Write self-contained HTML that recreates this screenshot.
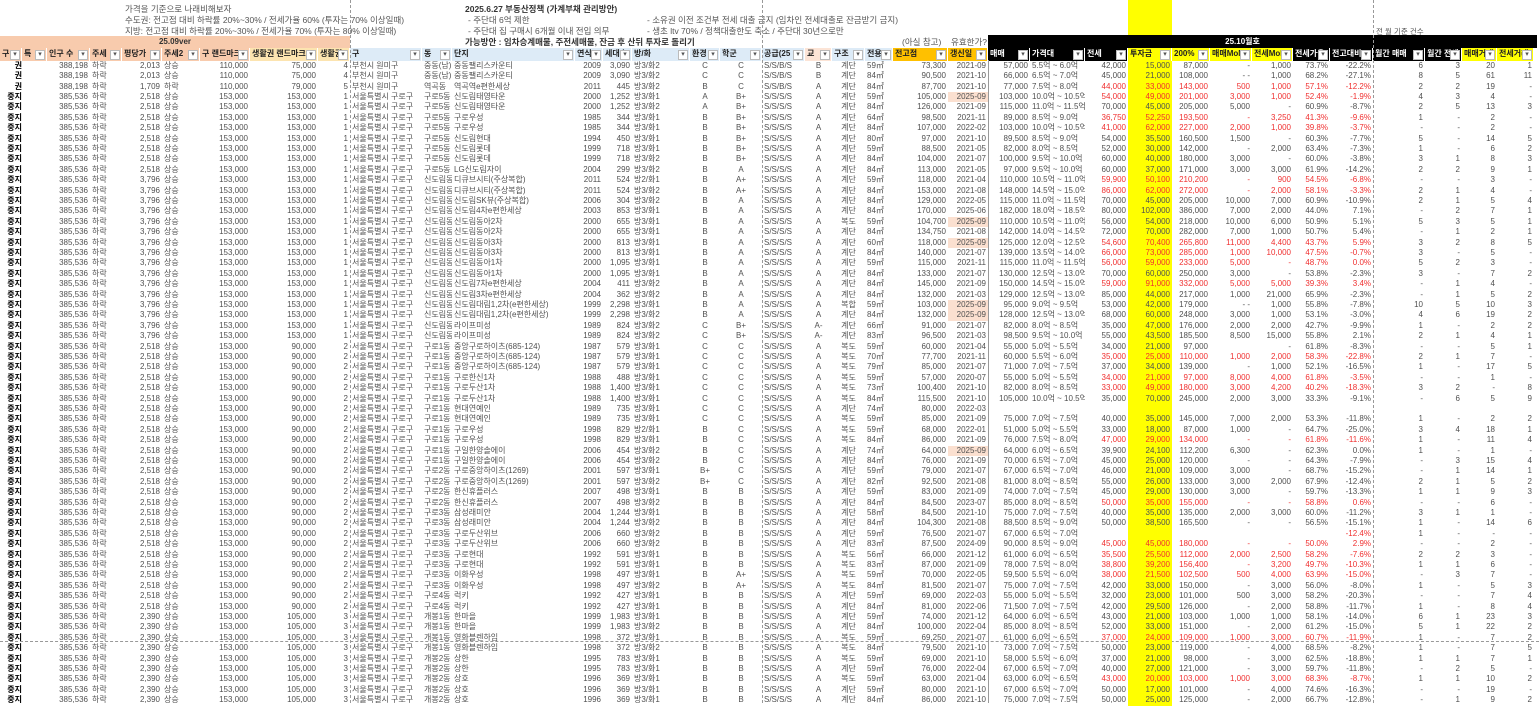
<!DOCTYPE html>
<html><head><meta charset="utf-8"><style>
*{margin:0;padding:0;box-sizing:border-box}
body{width:1539px;height:703px;overflow:hidden;background:#fff;font-family:"Liberation Sans","Noto Sans CJK KR",sans-serif;font-size:8px;color:#505050;position:relative}
.t{position:absolute;white-space:nowrap;font-size:8.5px;color:#555}
.bd{font-weight:bold;color:#333}
.r,.h{position:absolute;left:0;display:flex;height:10.4px;line-height:10.4px;white-space:nowrap}
.h{top:48px;height:12.5px;line-height:12.5px;font-weight:bold;color:#222;font-size:8px}
.r i,.h i{font-style:normal;display:block;overflow:hidden;padding:0 2px;flex:none;position:relative}
.h i{padding-right:11px;border-right:1px solid #fff}
.h i::after{content:"▾";position:absolute;right:1px;top:2px;width:8px;height:8px;line-height:7px;font-size:7px;text-align:center;background:#fff;border:1px solid #bbb;color:#555;font-weight:normal}
i:nth-child(1){width:22px}i:nth-child(2){width:25px}i:nth-child(3){width:43px}i:nth-child(4){width:32px}i:nth-child(5){width:40px}i:nth-child(6){width:38px}i:nth-child(7){width:50px}i:nth-child(8){width:68px}i:nth-child(9){width:32px}i:nth-child(10){width:72px}i:nth-child(11){width:30px}i:nth-child(12){width:123px}i:nth-child(13){width:28px}i:nth-child(14){width:29px}i:nth-child(15){width:58px}i:nth-child(16){width:30px}i:nth-child(17){width:42px}i:nth-child(18){width:43px}i:nth-child(19){width:27px}i:nth-child(20){width:33px}i:nth-child(21){width:28px}i:nth-child(22){width:55px}i:nth-child(23){width:40px}i:nth-child(24){width:42px}i:nth-child(25){width:55px}i:nth-child(26){width:43px}i:nth-child(27){width:44px}i:nth-child(28){width:38px}i:nth-child(29){width:42px}i:nth-child(30){width:41px}i:nth-child(31){width:37px}i:nth-child(32){width:43px}i:nth-child(33){width:52px}i:nth-child(34){width:37px}i:nth-child(35){width:35px}i:nth-child(36){width:37px}i:nth-child(37){width:5px}
.r i:nth-child(3),.r i:nth-child(5),.r i:nth-child(7),.r i:nth-child(8),.r i:nth-child(9),.r i:nth-child(13),.r i:nth-child(14),.r i:nth-child(22),.r i:nth-child(23),.r i:nth-child(24),.r i:nth-child(26),.r i:nth-child(27),.r i:nth-child(28),.r i:nth-child(29),.r i:nth-child(30),.r i:nth-child(31),.r i:nth-child(32),.r i:nth-child(33),.r i:nth-child(34),.r i:nth-child(35),.r i:nth-child(36){text-align:right}
.r i:nth-child(16),.r i:nth-child(17),.r i:nth-child(19),.r i:nth-child(20){text-align:center}
.r i:nth-child(1){text-align:right;color:#000;font-weight:bold;padding:0}
.r i:nth-child(27){background:#ffff00}
.x i:nth-child(n+26):nth-child(-n+32){color:#f03030}
.r i.p{background:#fbe0d0}
.pe{background:#f8cbad}.ye{background:#fce4b0}.lb{background:#ddebf7}.or{background:#ffc000}.pk{background:#fce4d6}.bk{background:#000;color:#fff}.yl{background:#ffff00}
.vl{position:absolute;top:0;height:703px;border-left:1px dashed #999}
</style></head><body>
<div style="position:absolute;left:1128px;top:0;width:44px;height:36px;background:#ffff00"></div>
<div class="t" style="left:125px;top:3px">가격을 기준으로 나래비해보자</div>
<div class="t" style="left:125px;top:14px">수도권: 전고점 대비 하락률 20%~30% / 전세가율 60% (투자는 70% 이상일때)</div>
<div class="t" style="left:125px;top:25px">지방: 전고점 대비 하락률 20%~30% / 전세가율 70% (투자는 80% 이상일때)</div>
<div class="t bd" style="left:465px;top:3px">2025.6.27 부동산정책 (가계부채 관리방안)</div>
<div class="t" style="left:468px;top:14px">- 주단대 6억 제한</div>
<div class="t" style="left:468px;top:25px">- 주단대 집 구매시 6개월 이내 전입 의무</div>
<div class="t" style="left:647px;top:14px">- 소유권 이전 조건부 전세 대출 금지 (임차인 전세대출로 잔금받기 금지)</div>
<div class="t" style="left:647px;top:25px">- 생초 ltv 70% / 정책대출한도 축소 / 주단대 30년으로만</div>
<div class="t bd" style="left:465px;top:36px">가능방안 : 임차승계매물, 주전세매물, 잔금 후 산뒤 투자로 돌리기</div>
<div class="t" style="left:902px;top:36px">(아실 참고)</div>
<div class="t" style="left:951px;top:36px">유효한가?</div>
<div class="t" style="left:1376px;top:26px;font-size:7.5px">전 월 기준 건수</div>
<div style="position:absolute;left:0;top:36px;width:350px;height:12px;background:#f8cbad;text-align:center;font-weight:bold;line-height:12px;color:#333">25.09ver</div>
<div style="position:absolute;left:988px;top:35px;width:549px;height:13px;background:#000;color:#fff;font-weight:bold;line-height:13px;text-align:center;padding-right:40px">25.10월호</div>
<div class="h"><i class="pe">구 ㅋ</i><i class="pe">특</i><i class="pe">인구 수</i><i class="pe">주세</i><i class="pe">평당가</i><i class="pe">주세2</i><i class="pe">구 랜드마크</i><i class="ye">생활권 랜드마크</i><i class="ye">생활권</i><i class="lb">구</i><i class="lb">동</i><i class="lb">단지</i><i class="lb">연식</i><i class="lb">세대수</i><i class="lb">방/화</i><i class="lb">환경</i><i class="lb">학군</i><i class="lb">공급(25</i><i class="pk">교</i><i class="lb">구조</i><i class="lb">전용</i><i class="or">전고점</i><i class="or">갱신일</i><i class="bk">매매</i><i class="bk">가격대</i><i class="bk">전세</i><i class="yl">투자금</i><i class="yl">200%</i><i class="yl">매매MoM</i><i class="yl">전세MoM</i><i class="bk">전세가율</i><i class="bk">전고대비</i><i class="bk">월간 매매</i><i class="bk">월간 전세</i><i class="yl">매매거래</i><i class="yl">전세거래</i></div>
<div style="position:absolute;left:988px;top:60px;height:643px;border-left:1px solid #999"></div>
<div class="vl" style="left:350px"></div><div class="vl" style="left:762px"></div><div class="vl" style="left:1373px"></div>
<div style="position:absolute;left:0;top:641px;width:1539px;border-top:1px dashed #999"></div>

<div style="position:absolute;left:0;top:60.8px">
<div class="r" style="top:0px"><i>권</i><i></i><i>388,198</i><i>하락</i><i>2,013</i><i>상승</i><i>110,000</i><i>75,000</i><i>4</i><i>부천시 원미구</i><i>중동(남)</i><i>중동팰리스카운티</i><i>2009</i><i>3,090</i><i>방3/화2</i><i>C</i><i>C</i><i>S/S/B/S</i><i>B</i><i>계단</i><i>59㎡</i><i>73,300</i><i>2021-09</i><i>57,000</i><i>5.5억 ~ 6.0억</i><i>42,000</i><i>15,000</i><i>87,000</i><i>-</i><i>1,000</i><i>73.7%</i><i>-22.2%</i><i>6</i><i>3</i><i>20</i><i>1</i><i></i></div>
<div class="r" style="top:10.4px"><i>권</i><i></i><i>388,198</i><i>하락</i><i>2,013</i><i>상승</i><i>110,000</i><i>75,000</i><i>4</i><i>부천시 원미구</i><i>중동(남)</i><i>중동팰리스카운티</i><i>2009</i><i>3,090</i><i>방3/화2</i><i>C</i><i>C</i><i>S/S/B/S</i><i>B</i><i>계단</i><i>84㎡</i><i>90,500</i><i>2021-10</i><i>66,000</i><i>6.5억 ~ 7.0억</i><i>45,000</i><i>21,000</i><i>108,000</i><i>- -</i><i>1,000</i><i>68.2%</i><i>-27.1%</i><i>8</i><i>5</i><i>61</i><i>11</i><i></i></div>
<div class="r x" style="top:20.8px"><i>권</i><i></i><i>388,198</i><i>하락</i><i>1,709</i><i>하락</i><i>110,000</i><i>79,000</i><i>5</i><i>부천시 원미구</i><i>역곡동</i><i>역곡역e편한세상</i><i>2011</i><i>445</i><i>방3/화2</i><i>B</i><i>C</i><i>S/S/B/S</i><i>A</i><i>계단</i><i>84㎡</i><i>87,700</i><i>2021-10</i><i>77,000</i><i>7.5억 ~ 8.0억</i><i>44,000</i><i>33,000</i><i>143,000</i><i>500</i><i>1,000</i><i>57.1%</i><i>-12.2%</i><i>2</i><i>2</i><i>19</i><i>-</i><i></i></div>
<div class="r x" style="top:31.2px"><i>중지</i><i></i><i>385,536</i><i>하락</i><i>2,518</i><i>상승</i><i>153,000</i><i>153,000</i><i>1</i><i>서울특별시 구로구</i><i>구로5동</i><i>신도림태영타운</i><i>2000</i><i>1,252</i><i>방3/화1</i><i>A</i><i>B+</i><i>S/S/S/S</i><i>A</i><i>계단</i><i>59㎡</i><i>105,000</i><i class="p">2025-09</i><i>103,000</i><i>10.0억 ~ 10.5억</i><i>54,000</i><i>49,000</i><i>201,000</i><i>3,000</i><i>1,000</i><i>52.4%</i><i>-1.9%</i><i>4</i><i>3</i><i>4</i><i>-</i><i></i></div>
<div class="r" style="top:41.6px"><i>중지</i><i></i><i>385,536</i><i>하락</i><i>2,518</i><i>상승</i><i>153,000</i><i>153,000</i><i>1</i><i>서울특별시 구로구</i><i>구로5동</i><i>신도림태영타운</i><i>2000</i><i>1,252</i><i>방3/화2</i><i>A</i><i>B+</i><i>S/S/S/S</i><i>A</i><i>계단</i><i>84㎡</i><i>126,000</i><i>2021-09</i><i>115,000</i><i>11.0억 ~ 11.5억</i><i>70,000</i><i>45,000</i><i>205,000</i><i>5,000</i><i>-</i><i>60.9%</i><i>-8.7%</i><i>2</i><i>5</i><i>13</i><i>3</i><i></i></div>
<div class="r x" style="top:52px"><i>중지</i><i></i><i>385,536</i><i>하락</i><i>2,518</i><i>상승</i><i>153,000</i><i>153,000</i><i>1</i><i>서울특별시 구로구</i><i>구로5동</i><i>구로우성</i><i>1985</i><i>344</i><i>방3/화1</i><i>B</i><i>B+</i><i>S/S/S/S</i><i>A</i><i>계단</i><i>64㎡</i><i>98,500</i><i>2021-11</i><i>89,000</i><i>8.5억 ~ 9.0억</i><i>36,750</i><i>52,250</i><i>193,500</i><i>-</i><i>3,250</i><i>41.3%</i><i>-9.6%</i><i>1</i><i>-</i><i>2</i><i>-</i><i></i></div>
<div class="r x" style="top:62.4px"><i>중지</i><i></i><i>385,536</i><i>하락</i><i>2,518</i><i>상승</i><i>153,000</i><i>153,000</i><i>1</i><i>서울특별시 구로구</i><i>구로5동</i><i>구로우성</i><i>1985</i><i>344</i><i>방3/화1</i><i>B</i><i>B+</i><i>S/S/S/S</i><i>A</i><i>계단</i><i>84㎡</i><i>107,000</i><i>2022-02</i><i>103,000</i><i>10.0억 ~ 10.5억</i><i>41,000</i><i>62,000</i><i>227,000</i><i>2,000</i><i>1,000</i><i>39.8%</i><i>-3.7%</i><i>-</i><i>-</i><i>2</i><i>-</i><i></i></div>
<div class="r" style="top:72.8px"><i>중지</i><i></i><i>385,536</i><i>하락</i><i>2,518</i><i>상승</i><i>153,000</i><i>153,000</i><i>1</i><i>서울특별시 구로구</i><i>구로5동</i><i>신도림현대</i><i>1994</i><i>450</i><i>방3/화1</i><i>B</i><i>B+</i><i>S/S/S/S</i><i>A</i><i>계단</i><i>80㎡</i><i>97,000</i><i>2021-10</i><i>89,500</i><i>8.5억 ~ 9.0억</i><i>54,000</i><i>35,500</i><i>160,500</i><i>1,500</i><i>-</i><i>60.3%</i><i>-7.7%</i><i>5</i><i>-</i><i>14</i><i>5</i><i></i></div>
<div class="r" style="top:83.2px"><i>중지</i><i></i><i>385,536</i><i>하락</i><i>2,518</i><i>상승</i><i>153,000</i><i>153,000</i><i>1</i><i>서울특별시 구로구</i><i>구로5동</i><i>신도림롯데</i><i>1999</i><i>718</i><i>방3/화1</i><i>B</i><i>B+</i><i>S/S/S/S</i><i>A</i><i>계단</i><i>59㎡</i><i>88,500</i><i>2021-05</i><i>82,000</i><i>8.0억 ~ 8.5억</i><i>52,000</i><i>30,000</i><i>142,000</i><i>-</i><i>2,000</i><i>63.4%</i><i>-7.3%</i><i>1</i><i>-</i><i>6</i><i>2</i><i></i></div>
<div class="r" style="top:93.6px"><i>중지</i><i></i><i>385,536</i><i>하락</i><i>2,518</i><i>상승</i><i>153,000</i><i>153,000</i><i>1</i><i>서울특별시 구로구</i><i>구로5동</i><i>신도림롯데</i><i>1999</i><i>718</i><i>방3/화2</i><i>B</i><i>B+</i><i>S/S/S/S</i><i>A</i><i>계단</i><i>84㎡</i><i>104,000</i><i>2021-07</i><i>100,000</i><i>9.5억 ~ 10.0억</i><i>60,000</i><i>40,000</i><i>180,000</i><i>3,000</i><i>-</i><i>60.0%</i><i>-3.8%</i><i>3</i><i>1</i><i>8</i><i>3</i><i></i></div>
<div class="r" style="top:104px"><i>중지</i><i></i><i>385,536</i><i>하락</i><i>2,518</i><i>상승</i><i>153,000</i><i>153,000</i><i>1</i><i>서울특별시 구로구</i><i>구로5동</i><i>LG신도림자이</i><i>2004</i><i>299</i><i>방3/화2</i><i>B</i><i>A</i><i>S/S/S/S</i><i>A</i><i>계단</i><i>84㎡</i><i>113,000</i><i>2021-05</i><i>97,000</i><i>9.5억 ~ 10.0억</i><i>60,000</i><i>37,000</i><i>171,000</i><i>3,000</i><i>3,000</i><i>61.9%</i><i>-14.2%</i><i>2</i><i>2</i><i>9</i><i>1</i><i></i></div>
<div class="r x" style="top:114.4px"><i>중지</i><i></i><i>385,536</i><i>하락</i><i>3,796</i><i>상승</i><i>153,000</i><i>153,000</i><i>1</i><i>서울특별시 구로구</i><i>신도림동</i><i>디큐브시티(주상복합)</i><i>2011</i><i>524</i><i>방2/화1</i><i>B</i><i>A+</i><i>S/S/S/S</i><i>A</i><i>계단</i><i>59㎡</i><i>118,000</i><i>2021-04</i><i>110,000</i><i>10.5억 ~ 11.0억</i><i>59,900</i><i>50,100</i><i>210,200</i><i>-</i><i>900</i><i>54.5%</i><i>-6.8%</i><i>-</i><i>-</i><i>3</i><i>-</i><i></i></div>
<div class="r x" style="top:124.8px"><i>중지</i><i></i><i>385,536</i><i>하락</i><i>3,796</i><i>상승</i><i>153,000</i><i>153,000</i><i>1</i><i>서울특별시 구로구</i><i>신도림동</i><i>디큐브시티(주상복합)</i><i>2011</i><i>524</i><i>방3/화2</i><i>B</i><i>A+</i><i>S/S/S/S</i><i>A</i><i>계단</i><i>84㎡</i><i>153,000</i><i>2021-08</i><i>148,000</i><i>14.5억 ~ 15.0억</i><i>86,000</i><i>62,000</i><i>272,000</i><i>-</i><i>2,000</i><i>58.1%</i><i>-3.3%</i><i>2</i><i>1</i><i>4</i><i>-</i><i></i></div>
<div class="r" style="top:135.2px"><i>중지</i><i></i><i>385,536</i><i>하락</i><i>3,796</i><i>상승</i><i>153,000</i><i>153,000</i><i>1</i><i>서울특별시 구로구</i><i>신도림동</i><i>신도림SK뷰(주상복합)</i><i>2006</i><i>304</i><i>방3/화2</i><i>B</i><i>A</i><i>S/S/S/S</i><i>A</i><i>계단</i><i>84㎡</i><i>129,000</i><i>2022-05</i><i>115,000</i><i>11.0억 ~ 11.5억</i><i>70,000</i><i>45,000</i><i>205,000</i><i>10,000</i><i>7,000</i><i>60.9%</i><i>-10.9%</i><i>2</i><i>1</i><i>5</i><i>4</i><i></i></div>
<div class="r" style="top:145.6px"><i>중지</i><i></i><i>385,536</i><i>하락</i><i>3,796</i><i>상승</i><i>153,000</i><i>153,000</i><i>1</i><i>서울특별시 구로구</i><i>신도림동</i><i>신도림4차e편한세상</i><i>2003</i><i>853</i><i>방3/화1</i><i>B</i><i>A</i><i>S/S/S/S</i><i>A</i><i>계단</i><i>84㎡</i><i>170,000</i><i>2025-06</i><i>182,000</i><i>18.0억 ~ 18.5억</i><i>80,000</i><i>102,000</i><i>386,000</i><i>7,000</i><i>2,000</i><i>44.0%</i><i>7.1%</i><i>-</i><i>2</i><i>7</i><i>1</i><i></i></div>
<div class="r" style="top:156px"><i>중지</i><i></i><i>385,536</i><i>하락</i><i>3,796</i><i>상승</i><i>153,000</i><i>153,000</i><i>1</i><i>서울특별시 구로구</i><i>신도림동</i><i>신도림동아2차</i><i>2000</i><i>655</i><i>방3/화1</i><i>B</i><i>A</i><i>S/S/S/S</i><i>A</i><i>복도</i><i>59㎡</i><i>104,700</i><i class="p">2025-09</i><i>110,000</i><i>10.5억 ~ 11.0억</i><i>56,000</i><i>54,000</i><i>218,000</i><i>10,000</i><i>6,000</i><i>50.9%</i><i>5.1%</i><i>5</i><i>3</i><i>5</i><i>1</i><i></i></div>
<div class="r" style="top:166.4px"><i>중지</i><i></i><i>385,536</i><i>하락</i><i>3,796</i><i>상승</i><i>153,000</i><i>153,000</i><i>1</i><i>서울특별시 구로구</i><i>신도림동</i><i>신도림동아2차</i><i>2000</i><i>655</i><i>방3/화1</i><i>B</i><i>A</i><i>S/S/S/S</i><i>A</i><i>계단</i><i>84㎡</i><i>134,750</i><i>2021-08</i><i>142,000</i><i>14.0억 ~ 14.5억</i><i>72,000</i><i>70,000</i><i>282,000</i><i>7,000</i><i>1,000</i><i>50.7%</i><i>5.4%</i><i>-</i><i>1</i><i>2</i><i>1</i><i></i></div>
<div class="r x" style="top:176.8px"><i>중지</i><i></i><i>385,536</i><i>하락</i><i>3,796</i><i>상승</i><i>153,000</i><i>153,000</i><i>1</i><i>서울특별시 구로구</i><i>신도림동</i><i>신도림동아3차</i><i>2000</i><i>813</i><i>방3/화1</i><i>B</i><i>A</i><i>S/S/S/S</i><i>A</i><i>계단</i><i>60㎡</i><i>118,000</i><i class="p">2025-09</i><i>125,000</i><i>12.0억 ~ 12.5억</i><i>54,600</i><i>70,400</i><i>265,800</i><i>11,000</i><i>4,400</i><i>43.7%</i><i>5.9%</i><i>3</i><i>2</i><i>8</i><i>5</i><i></i></div>
<div class="r x" style="top:187.2px"><i>중지</i><i></i><i>385,536</i><i>하락</i><i>3,796</i><i>상승</i><i>153,000</i><i>153,000</i><i>1</i><i>서울특별시 구로구</i><i>신도림동</i><i>신도림동아3차</i><i>2000</i><i>813</i><i>방3/화1</i><i>B</i><i>A</i><i>S/S/S/S</i><i>A</i><i>계단</i><i>84㎡</i><i>140,000</i><i>2021-07</i><i>139,000</i><i>13.5억 ~ 14.0억</i><i>66,000</i><i>73,000</i><i>285,000</i><i>1,000</i><i>10,000</i><i>47.5%</i><i>-0.7%</i><i>3</i><i>-</i><i>5</i><i>-</i><i></i></div>
<div class="r x" style="top:197.6px"><i>중지</i><i></i><i>385,536</i><i>하락</i><i>3,796</i><i>상승</i><i>153,000</i><i>153,000</i><i>1</i><i>서울특별시 구로구</i><i>신도림동</i><i>신도림동아1차</i><i>2000</i><i>1,095</i><i>방3/화1</i><i>B</i><i>A</i><i>S/S/S/S</i><i>A</i><i>계단</i><i>59㎡</i><i>115,000</i><i>2021-11</i><i>115,000</i><i>11.0억 ~ 11.5억</i><i>56,000</i><i>59,000</i><i>233,000</i><i>5,000</i><i>-</i><i>48.7%</i><i>0.0%</i><i>5</i><i>2</i><i>3</i><i>-</i><i></i></div>
<div class="r" style="top:208px"><i>중지</i><i></i><i>385,536</i><i>하락</i><i>3,796</i><i>상승</i><i>153,000</i><i>153,000</i><i>1</i><i>서울특별시 구로구</i><i>신도림동</i><i>신도림동아1차</i><i>2000</i><i>1,095</i><i>방3/화1</i><i>B</i><i>A</i><i>S/S/S/S</i><i>A</i><i>계단</i><i>84㎡</i><i>133,000</i><i>2021-07</i><i>130,000</i><i>12.5억 ~ 13.0억</i><i>70,000</i><i>60,000</i><i>250,000</i><i>3,000</i><i>-</i><i>53.8%</i><i>-2.3%</i><i>3</i><i>-</i><i>7</i><i>2</i><i></i></div>
<div class="r x" style="top:218.4px"><i>중지</i><i></i><i>385,536</i><i>하락</i><i>3,796</i><i>상승</i><i>153,000</i><i>153,000</i><i>1</i><i>서울특별시 구로구</i><i>신도림동</i><i>신도림7차e편한세상</i><i>2004</i><i>411</i><i>방3/화2</i><i>B</i><i>A</i><i>S/S/S/S</i><i>A</i><i>계단</i><i>84㎡</i><i>145,000</i><i>2021-09</i><i>150,000</i><i>14.5억 ~ 15.0억</i><i>59,000</i><i>91,000</i><i>332,000</i><i>5,000</i><i>5,000</i><i>39.3%</i><i>3.4%</i><i>-</i><i>1</i><i>4</i><i>-</i><i></i></div>
<div class="r" style="top:228.8px"><i>중지</i><i></i><i>385,536</i><i>하락</i><i>3,796</i><i>상승</i><i>153,000</i><i>153,000</i><i>1</i><i>서울특별시 구로구</i><i>신도림동</i><i>신도림3차e편한세상</i><i>2004</i><i>362</i><i>방3/화2</i><i>B</i><i>A</i><i>S/S/S/S</i><i>A</i><i>계단</i><i>84㎡</i><i>132,000</i><i>2021-03</i><i>129,000</i><i>12.5억 ~ 13.0억</i><i>85,000</i><i>44,000</i><i>217,000</i><i>1,000</i><i>21,000</i><i>65.9%</i><i>-2.3%</i><i>-</i><i>1</i><i>5</i><i>2</i><i></i></div>
<div class="r" style="top:239.2px"><i>중지</i><i></i><i>385,536</i><i>하락</i><i>3,796</i><i>상승</i><i>153,000</i><i>153,000</i><i>1</i><i>서울특별시 구로구</i><i>신도림동</i><i>신도림대림1,2차(e편한세상)</i><i>1999</i><i>2,298</i><i>방3/화1</i><i>B</i><i>A</i><i>S/S/S/S</i><i>A</i><i>복합</i><i>59㎡</i><i>103,000</i><i class="p">2025-09</i><i>95,000</i><i>9.0억 ~ 9.5억</i><i>53,000</i><i>42,000</i><i>179,000</i><i>- -</i><i>1,000</i><i>55.8%</i><i>-7.8%</i><i>10</i><i>5</i><i>10</i><i>3</i><i></i></div>
<div class="r" style="top:249.6px"><i>중지</i><i></i><i>385,536</i><i>하락</i><i>3,796</i><i>상승</i><i>153,000</i><i>153,000</i><i>1</i><i>서울특별시 구로구</i><i>신도림동</i><i>신도림대림1,2차(e편한세상)</i><i>1999</i><i>2,298</i><i>방3/화2</i><i>B</i><i>A</i><i>S/S/S/S</i><i>A</i><i>계단</i><i>84㎡</i><i>132,000</i><i class="p">2025-09</i><i>128,000</i><i>12.5억 ~ 13.0억</i><i>68,000</i><i>60,000</i><i>248,000</i><i>3,000</i><i>1,000</i><i>53.1%</i><i>-3.0%</i><i>4</i><i>6</i><i>19</i><i>2</i><i></i></div>
<div class="r" style="top:260px"><i>중지</i><i></i><i>385,536</i><i>하락</i><i>3,796</i><i>상승</i><i>153,000</i><i>153,000</i><i>1</i><i>서울특별시 구로구</i><i>신도림동</i><i>라이프미성</i><i>1989</i><i>824</i><i>방3/화2</i><i>C</i><i>B+</i><i>S/S/S/S</i><i>A-</i><i>계단</i><i>66㎡</i><i>91,000</i><i>2021-07</i><i>82,000</i><i>8.0억 ~ 8.5억</i><i>35,000</i><i>47,000</i><i>176,000</i><i>2,000</i><i>2,000</i><i>42.7%</i><i>-9.9%</i><i>1</i><i>-</i><i>2</i><i>2</i><i></i></div>
<div class="r" style="top:270.4px"><i>중지</i><i></i><i>385,536</i><i>하락</i><i>3,796</i><i>상승</i><i>153,000</i><i>153,000</i><i>1</i><i>서울특별시 구로구</i><i>신도림동</i><i>라이프미성</i><i>1989</i><i>824</i><i>방3/화2</i><i>C</i><i>B+</i><i>S/S/S/S</i><i>A-</i><i>계단</i><i>83㎡</i><i>96,500</i><i>2021-03</i><i>98,500</i><i>9.5억 ~ 10.0억</i><i>55,000</i><i>43,500</i><i>185,500</i><i>8,500</i><i>15,000</i><i>55.8%</i><i>2.1%</i><i>2</i><i>1</i><i>4</i><i>1</i><i></i></div>
<div class="r" style="top:280.8px"><i>중지</i><i></i><i>385,536</i><i>하락</i><i>2,518</i><i>상승</i><i>153,000</i><i>90,000</i><i>2</i><i>서울특별시 구로구</i><i>구로1동</i><i>중앙구로하이츠(685-124)</i><i>1987</i><i>579</i><i>방3/화1</i><i>C</i><i>C</i><i>S/S/S/S</i><i>A</i><i>복도</i><i>59㎡</i><i>60,000</i><i>2021-04</i><i>55,000</i><i>5.0억 ~ 5.5억</i><i>34,000</i><i>21,000</i><i>97,000</i><i></i><i>-</i><i>61.8%</i><i>-8.3%</i><i>-</i><i>-</i><i>5</i><i>1</i><i></i></div>
<div class="r x" style="top:291.2px"><i>중지</i><i></i><i>385,536</i><i>하락</i><i>2,518</i><i>상승</i><i>153,000</i><i>90,000</i><i>2</i><i>서울특별시 구로구</i><i>구로1동</i><i>중앙구로하이츠(685-124)</i><i>1987</i><i>579</i><i>방3/화1</i><i>C</i><i>C</i><i>S/S/S/S</i><i>A</i><i>복도</i><i>70㎡</i><i>77,700</i><i>2021-11</i><i>60,000</i><i>5.5억 ~ 6.0억</i><i>35,000</i><i>25,000</i><i>110,000</i><i>1,000</i><i>2,000</i><i>58.3%</i><i>-22.8%</i><i>2</i><i>1</i><i>7</i><i>-</i><i></i></div>
<div class="r" style="top:301.6px"><i>중지</i><i></i><i>385,536</i><i>하락</i><i>2,518</i><i>상승</i><i>153,000</i><i>90,000</i><i>2</i><i>서울특별시 구로구</i><i>구로1동</i><i>중앙구로하이츠(685-124)</i><i>1987</i><i>579</i><i>방3/화1</i><i>C</i><i>C</i><i>S/S/S/S</i><i>A</i><i>복도</i><i>79㎡</i><i>85,000</i><i>2021-07</i><i>71,000</i><i>7.0억 ~ 7.5억</i><i>37,000</i><i>34,000</i><i>139,000</i><i>-</i><i>1,000</i><i>52.1%</i><i>-16.5%</i><i>1</i><i>-</i><i>17</i><i>5</i><i></i></div>
<div class="r x" style="top:312px"><i>중지</i><i></i><i>385,536</i><i>하락</i><i>2,518</i><i>상승</i><i>153,000</i><i>90,000</i><i>2</i><i>서울특별시 구로구</i><i>구로1동</i><i>구로한신1차</i><i>1988</i><i>488</i><i>방3/화1</i><i>C</i><i>C</i><i>S/S/S/S</i><i>A</i><i>복도</i><i>59㎡</i><i>57,000</i><i>2020-07</i><i>55,000</i><i>5.0억 ~ 5.5억</i><i>34,000</i><i>21,000</i><i>97,000</i><i>8,000</i><i>4,000</i><i>61.8%</i><i>-3.5%</i><i>-</i><i>-</i><i>1</i><i>-</i><i></i></div>
<div class="r x" style="top:322.4px"><i>중지</i><i></i><i>385,536</i><i>하락</i><i>2,518</i><i>상승</i><i>153,000</i><i>90,000</i><i>2</i><i>서울특별시 구로구</i><i>구로1동</i><i>구로두산1차</i><i>1988</i><i>1,400</i><i>방3/화1</i><i>C</i><i>C</i><i>S/S/S/S</i><i>A</i><i>복도</i><i>73㎡</i><i>100,400</i><i>2021-10</i><i>82,000</i><i>8.0억 ~ 8.5억</i><i>33,000</i><i>49,000</i><i>180,000</i><i>3,000</i><i>4,200</i><i>40.2%</i><i>-18.3%</i><i>3</i><i>2</i><i>-</i><i>8</i><i></i></div>
<div class="r" style="top:332.8px"><i>중지</i><i></i><i>385,536</i><i>하락</i><i>2,518</i><i>상승</i><i>153,000</i><i>90,000</i><i>2</i><i>서울특별시 구로구</i><i>구로1동</i><i>구로두산1차</i><i>1988</i><i>1,400</i><i>방3/화1</i><i>C</i><i>C</i><i>S/S/S/S</i><i>A</i><i>복도</i><i>84㎡</i><i>115,500</i><i>2021-10</i><i>105,000</i><i>10.0억 ~ 10.5억</i><i>35,000</i><i>70,000</i><i>245,000</i><i>2,000</i><i>3,000</i><i>33.3%</i><i>-9.1%</i><i>-</i><i>6</i><i>5</i><i>9</i><i></i></div>
<div class="r" style="top:343.2px"><i>중지</i><i></i><i>385,536</i><i>하락</i><i>2,518</i><i>상승</i><i>153,000</i><i>90,000</i><i>2</i><i>서울특별시 구로구</i><i>구로1동</i><i>현대연예인</i><i>1989</i><i>735</i><i>방3/화1</i><i>C</i><i>C</i><i>S/S/S/S</i><i>A</i><i>계단</i><i>74㎡</i><i>80,000</i><i>2022-03</i><i></i><i></i><i></i><i></i><i></i><i></i><i></i><i></i><i></i><i></i><i></i><i></i><i></i><i></i></div>
<div class="r" style="top:353.6px"><i>중지</i><i></i><i>385,536</i><i>하락</i><i>2,518</i><i>상승</i><i>153,000</i><i>90,000</i><i>2</i><i>서울특별시 구로구</i><i>구로1동</i><i>현대연예인</i><i>1989</i><i>735</i><i>방3/화1</i><i>C</i><i>C</i><i>S/S/S/S</i><i>A</i><i>복도</i><i>59㎡</i><i>85,000</i><i>2021-09</i><i>75,000</i><i>7.0억 ~ 7.5억</i><i>40,000</i><i>35,000</i><i>145,000</i><i>7,000</i><i>2,000</i><i>53.3%</i><i>-11.8%</i><i>1</i><i>-</i><i>2</i><i>2</i><i></i></div>
<div class="r" style="top:364px"><i>중지</i><i></i><i>385,536</i><i>하락</i><i>2,518</i><i>상승</i><i>153,000</i><i>90,000</i><i>2</i><i>서울특별시 구로구</i><i>구로1동</i><i>구로우성</i><i>1998</i><i>829</i><i>방2/화1</i><i>B</i><i>C</i><i>S/S/S/S</i><i>A</i><i>복도</i><i>59㎡</i><i>68,000</i><i>2022-01</i><i>51,000</i><i>5.0억 ~ 5.5억</i><i>33,000</i><i>18,000</i><i>87,000</i><i>1,000</i><i>-</i><i>64.7%</i><i>-25.0%</i><i>3</i><i>4</i><i>18</i><i>1</i><i></i></div>
<div class="r x" style="top:374.4px"><i>중지</i><i></i><i>385,536</i><i>하락</i><i>2,518</i><i>상승</i><i>153,000</i><i>90,000</i><i>2</i><i>서울특별시 구로구</i><i>구로1동</i><i>구로우성</i><i>1998</i><i>829</i><i>방3/화1</i><i>B</i><i>C</i><i>S/S/S/S</i><i>A</i><i>복도</i><i>84㎡</i><i>86,000</i><i>2021-09</i><i>76,000</i><i>7.5억 ~ 8.0억</i><i>47,000</i><i>29,000</i><i>134,000</i><i>-</i><i>-</i><i>61.8%</i><i>-11.6%</i><i>1</i><i>-</i><i>11</i><i>4</i><i></i></div>
<div class="r" style="top:384.8px"><i>중지</i><i></i><i>385,536</i><i>하락</i><i>2,518</i><i>상승</i><i>153,000</i><i>90,000</i><i>2</i><i>서울특별시 구로구</i><i>구로1동</i><i>구일한양솔에이</i><i>2006</i><i>454</i><i>방3/화2</i><i>B</i><i>C</i><i>S/S/S/S</i><i>A</i><i>계단</i><i>74㎡</i><i>64,000</i><i class="p">2025-09</i><i>64,000</i><i>6.0억 ~ 6.5억</i><i>39,900</i><i>24,100</i><i>112,200</i><i>6,300</i><i>-</i><i>62.3%</i><i>0.0%</i><i>1</i><i>-</i><i>1</i><i>-</i><i></i></div>
<div class="r" style="top:395.2px"><i>중지</i><i></i><i>385,536</i><i>하락</i><i>2,518</i><i>상승</i><i>153,000</i><i>90,000</i><i>2</i><i>서울특별시 구로구</i><i>구로1동</i><i>구일한양솔에이</i><i>2006</i><i>454</i><i>방3/화2</i><i>B</i><i>C</i><i>S/S/S/S</i><i>A</i><i>계단</i><i>84㎡</i><i>76,000</i><i>2021-09</i><i>70,000</i><i>6.5억 ~ 7.0억</i><i>45,000</i><i>25,000</i><i>120,000</i><i>-</i><i>-</i><i>64.3%</i><i>-7.9%</i><i>-</i><i>3</i><i>15</i><i>4</i><i></i></div>
<div class="r" style="top:405.6px"><i>중지</i><i></i><i>385,536</i><i>하락</i><i>2,518</i><i>상승</i><i>153,000</i><i>90,000</i><i>2</i><i>서울특별시 구로구</i><i>구로2동</i><i>구로중앙하이츠(1269)</i><i>2001</i><i>597</i><i>방3/화1</i><i>B+</i><i>C</i><i>S/S/S/S</i><i>A</i><i>계단</i><i>59㎡</i><i>79,000</i><i>2021-07</i><i>67,000</i><i>6.5억 ~ 7.0억</i><i>46,000</i><i>21,000</i><i>109,000</i><i>3,000</i><i>-</i><i>68.7%</i><i>-15.2%</i><i>-</i><i>1</i><i>14</i><i>1</i><i></i></div>
<div class="r" style="top:416px"><i>중지</i><i></i><i>385,536</i><i>하락</i><i>2,518</i><i>상승</i><i>153,000</i><i>90,000</i><i>2</i><i>서울특별시 구로구</i><i>구로2동</i><i>구로중앙하이츠(1269)</i><i>2001</i><i>597</i><i>방3/화2</i><i>B+</i><i>C</i><i>S/S/S/S</i><i>A</i><i>계단</i><i>82㎡</i><i>92,500</i><i>2021-08</i><i>81,000</i><i>8.0억 ~ 8.5억</i><i>55,000</i><i>26,000</i><i>133,000</i><i>3,000</i><i>2,000</i><i>67.9%</i><i>-12.4%</i><i>2</i><i>1</i><i>5</i><i>2</i><i></i></div>
<div class="r" style="top:426.4px"><i>중지</i><i></i><i>385,536</i><i>하락</i><i>2,518</i><i>상승</i><i>153,000</i><i>90,000</i><i>2</i><i>서울특별시 구로구</i><i>구로2동</i><i>한신휴플러스</i><i>2007</i><i>498</i><i>방3/화1</i><i>B</i><i>B</i><i>S/S/S/S</i><i>A</i><i>계단</i><i>59㎡</i><i>83,000</i><i>2021-09</i><i>74,000</i><i>7.0억 ~ 7.5억</i><i>45,000</i><i>29,000</i><i>130,000</i><i>3,000</i><i>-</i><i>59.7%</i><i>-13.3%</i><i>1</i><i>1</i><i>9</i><i>3</i><i></i></div>
<div class="r x" style="top:436.8px"><i>중지</i><i></i><i>385,536</i><i>하락</i><i>2,518</i><i>상승</i><i>153,000</i><i>90,000</i><i>2</i><i>서울특별시 구로구</i><i>구로2동</i><i>한신휴플러스</i><i>2007</i><i>498</i><i>방3/화2</i><i>B</i><i>B</i><i>S/S/S/S</i><i>A</i><i>계단</i><i>84㎡</i><i>84,500</i><i>2023-07</i><i>85,000</i><i>8.0억 ~ 8.5억</i><i>50,000</i><i>35,000</i><i>155,000</i><i>-</i><i>-</i><i>58.8%</i><i>0.6%</i><i>-</i><i>-</i><i>6</i><i>-</i><i></i></div>
<div class="r" style="top:447.2px"><i>중지</i><i></i><i>385,536</i><i>하락</i><i>2,518</i><i>상승</i><i>153,000</i><i>90,000</i><i>2</i><i>서울특별시 구로구</i><i>구로3동</i><i>삼성래미안</i><i>2004</i><i>1,244</i><i>방3/화1</i><i>B</i><i>B</i><i>S/S/S/S</i><i>A</i><i>계단</i><i>58㎡</i><i>84,500</i><i>2021-10</i><i>75,000</i><i>7.0억 ~ 7.5억</i><i>40,000</i><i>35,000</i><i>135,000</i><i>2,000</i><i>3,000</i><i>60.0%</i><i>-11.2%</i><i>3</i><i>1</i><i>1</i><i>-</i><i></i></div>
<div class="r" style="top:457.6px"><i>중지</i><i></i><i>385,536</i><i>하락</i><i>2,518</i><i>상승</i><i>153,000</i><i>90,000</i><i>2</i><i>서울특별시 구로구</i><i>구로3동</i><i>삼성래미안</i><i>2004</i><i>1,244</i><i>방3/화2</i><i>B</i><i>B</i><i>S/S/S/S</i><i>A</i><i>계단</i><i>84㎡</i><i>104,300</i><i>2021-08</i><i>88,500</i><i>8.5억 ~ 9.0억</i><i>50,000</i><i>38,500</i><i>165,500</i><i>-</i><i>-</i><i>56.5%</i><i>-15.1%</i><i>1</i><i>-</i><i>14</i><i>6</i><i></i></div>
<div class="r x" style="top:468px"><i>중지</i><i></i><i>385,536</i><i>하락</i><i>2,518</i><i>상승</i><i>153,000</i><i>90,000</i><i>2</i><i>서울특별시 구로구</i><i>구로3동</i><i>구로두산위브</i><i>2006</i><i>660</i><i>방3/화2</i><i>B</i><i>B</i><i>S/S/S/S</i><i>A</i><i>계단</i><i>59㎡</i><i>76,500</i><i>2021-07</i><i>67,000</i><i>6.5억 ~ 7.0억</i><i></i><i></i><i></i><i></i><i></i><i></i><i>-12.4%</i><i>1</i><i>-</i><i>-</i><i>-</i><i></i></div>
<div class="r x" style="top:478.4px"><i>중지</i><i></i><i>385,536</i><i>하락</i><i>2,518</i><i>상승</i><i>153,000</i><i>90,000</i><i>2</i><i>서울특별시 구로구</i><i>구로3동</i><i>구로두산위브</i><i>2006</i><i>660</i><i>방3/화2</i><i>B</i><i>B</i><i>S/S/S/S</i><i>A</i><i>계단</i><i>83㎡</i><i>87,500</i><i>2024-09</i><i>90,000</i><i>8.5억 ~ 9.0억</i><i>45,000</i><i>45,000</i><i>180,000</i><i>-</i><i>-</i><i>50.0%</i><i>2.9%</i><i>-</i><i>-</i><i>2</i><i>-</i><i></i></div>
<div class="r x" style="top:488.8px"><i>중지</i><i></i><i>385,536</i><i>하락</i><i>2,518</i><i>상승</i><i>153,000</i><i>90,000</i><i>2</i><i>서울특별시 구로구</i><i>구로3동</i><i>구로현대</i><i>1992</i><i>591</i><i>방3/화1</i><i>B</i><i>B</i><i>S/S/S/S</i><i>A</i><i>복도</i><i>56㎡</i><i>66,000</i><i>2021-12</i><i>61,000</i><i>6.0억 ~ 6.5억</i><i>35,500</i><i>25,500</i><i>112,000</i><i>2,000</i><i>2,500</i><i>58.2%</i><i>-7.6%</i><i>2</i><i>2</i><i>3</i><i>-</i><i></i></div>
<div class="r x" style="top:499.2px"><i>중지</i><i></i><i>385,536</i><i>하락</i><i>2,518</i><i>상승</i><i>153,000</i><i>90,000</i><i>2</i><i>서울특별시 구로구</i><i>구로3동</i><i>구로현대</i><i>1992</i><i>591</i><i>방3/화1</i><i>B</i><i>B</i><i>S/S/S/S</i><i>A</i><i>복도</i><i>83㎡</i><i>87,000</i><i>2021-09</i><i>78,000</i><i>7.5억 ~ 8.0억</i><i>38,800</i><i>39,200</i><i>156,400</i><i>-</i><i>3,200</i><i>49.7%</i><i>-10.3%</i><i>1</i><i>1</i><i>6</i><i>-</i><i></i></div>
<div class="r x" style="top:509.6px"><i>중지</i><i></i><i>385,536</i><i>하락</i><i>2,518</i><i>상승</i><i>153,000</i><i>90,000</i><i>2</i><i>서울특별시 구로구</i><i>구로3동</i><i>이화우성</i><i>1998</i><i>497</i><i>방3/화1</i><i>B</i><i>A+</i><i>S/S/S/S</i><i>A</i><i>복도</i><i>59㎡</i><i>70,000</i><i>2022-05</i><i>59,500</i><i>5.5억 ~ 6.0억</i><i>38,000</i><i>21,500</i><i>102,500</i><i>500</i><i>4,000</i><i>63.9%</i><i>-15.0%</i><i>-</i><i>3</i><i>7</i><i>-</i><i></i></div>
<div class="r" style="top:520px"><i>중지</i><i></i><i>385,536</i><i>하락</i><i>2,518</i><i>상승</i><i>153,000</i><i>90,000</i><i>2</i><i>서울특별시 구로구</i><i>구로3동</i><i>이화우성</i><i>1998</i><i>497</i><i>방3/화2</i><i>B</i><i>A+</i><i>S/S/S/S</i><i>A</i><i>복도</i><i>84㎡</i><i>81,500</i><i>2021-07</i><i>75,000</i><i>7.0억 ~ 7.5억</i><i>42,000</i><i>33,000</i><i>150,000</i><i>-</i><i>3,000</i><i>56.0%</i><i>-8.0%</i><i>1</i><i>-</i><i>5</i><i>3</i><i></i></div>
<div class="r" style="top:530.4px"><i>중지</i><i></i><i>385,536</i><i>하락</i><i>2,518</i><i>상승</i><i>153,000</i><i>90,000</i><i>2</i><i>서울특별시 구로구</i><i>구로4동</i><i>럭키</i><i>1992</i><i>427</i><i>방3/화1</i><i>B</i><i>B</i><i>S/S/S/S</i><i>A</i><i>계단</i><i>59㎡</i><i>69,000</i><i>2022-03</i><i>55,000</i><i>5.0억 ~ 5.5억</i><i>32,000</i><i>23,000</i><i>101,000</i><i>500</i><i>3,000</i><i>58.2%</i><i>-20.3%</i><i>-</i><i>-</i><i>7</i><i>4</i><i></i></div>
<div class="r" style="top:540.8px"><i>중지</i><i></i><i>385,536</i><i>하락</i><i>2,518</i><i>상승</i><i>153,000</i><i>90,000</i><i>2</i><i>서울특별시 구로구</i><i>구로4동</i><i>럭키</i><i>1992</i><i>427</i><i>방3/화1</i><i>B</i><i>B</i><i>S/S/S/S</i><i>A</i><i>계단</i><i>84㎡</i><i>81,000</i><i>2022-06</i><i>71,500</i><i>7.0억 ~ 7.5억</i><i>42,000</i><i>29,500</i><i>126,000</i><i>-</i><i>2,000</i><i>58.8%</i><i>-11.7%</i><i>1</i><i>-</i><i>8</i><i>4</i><i></i></div>
<div class="r" style="top:551.2px"><i>중지</i><i></i><i>385,536</i><i>하락</i><i>2,390</i><i>상승</i><i>153,000</i><i>105,000</i><i>3</i><i>서울특별시 구로구</i><i>개봉1동</i><i>한마을</i><i>1999</i><i>1,983</i><i>방3/화1</i><i>B</i><i>B</i><i>S/S/S/S</i><i>A</i><i>계단</i><i>59㎡</i><i>74,000</i><i>2021-12</i><i>64,000</i><i>6.0억 ~ 6.5억</i><i>43,000</i><i>21,000</i><i>103,000</i><i>1,000</i><i>1,000</i><i>58.1%</i><i>-14.0%</i><i>6</i><i>1</i><i>23</i><i>3</i><i></i></div>
<div class="r" style="top:561.6px"><i>중지</i><i></i><i>385,536</i><i>하락</i><i>2,390</i><i>상승</i><i>153,000</i><i>105,000</i><i>3</i><i>서울특별시 구로구</i><i>개봉1동</i><i>한마을</i><i>1999</i><i>1,983</i><i>방3/화2</i><i>B</i><i>B</i><i>S/S/S/S</i><i>A</i><i>계단</i><i>84㎡</i><i>100,000</i><i>2022-04</i><i>85,000</i><i>8.0억 ~ 8.5억</i><i>52,000</i><i>33,000</i><i>151,000</i><i>-</i><i>2,000</i><i>61.2%</i><i>-15.0%</i><i>5</i><i>1</i><i>22</i><i>2</i><i></i></div>
<div class="r x" style="top:572px"><i>중지</i><i></i><i>385,536</i><i>하락</i><i>2,390</i><i>상승</i><i>153,000</i><i>105,000</i><i>3</i><i>서울특별시 구로구</i><i>개봉1동</i><i>영화블렌하임</i><i>1998</i><i>372</i><i>방3/화1</i><i>B</i><i>B</i><i>S/S/S/S</i><i>A</i><i>복도</i><i>59㎡</i><i>69,250</i><i>2021-07</i><i>61,000</i><i>6.0억 ~ 6.5억</i><i>37,000</i><i>24,000</i><i>109,000</i><i>1,000</i><i>3,000</i><i>60.7%</i><i>-11.9%</i><i>1</i><i>-</i><i>7</i><i>2</i><i></i></div>
<div class="r" style="top:582.4px"><i>중지</i><i></i><i>385,536</i><i>하락</i><i>2,390</i><i>상승</i><i>153,000</i><i>105,000</i><i>3</i><i>서울특별시 구로구</i><i>개봉1동</i><i>영화블렌하임</i><i>1998</i><i>372</i><i>방3/화2</i><i>B</i><i>B</i><i>S/S/S/S</i><i>A</i><i>복도</i><i>84㎡</i><i>79,500</i><i>2021-10</i><i>73,000</i><i>7.0억 ~ 7.5억</i><i>50,000</i><i>23,000</i><i>119,000</i><i>-</i><i>4,000</i><i>68.5%</i><i>-8.2%</i><i>1</i><i>-</i><i>7</i><i>5</i><i></i></div>
<div class="r" style="top:592.8px"><i>중지</i><i></i><i>385,536</i><i>하락</i><i>2,390</i><i>상승</i><i>153,000</i><i>105,000</i><i>3</i><i>서울특별시 구로구</i><i>개봉2동</i><i>상한</i><i>1995</i><i>783</i><i>방3/화1</i><i>B</i><i>B</i><i>S/S/S/S</i><i>A</i><i>복도</i><i>59㎡</i><i>69,000</i><i>2021-10</i><i>58,000</i><i>5.5억 ~ 6.0억</i><i>37,000</i><i>21,000</i><i>98,000</i><i>-</i><i>3,000</i><i>62.5%</i><i>-18.8%</i><i>1</i><i>1</i><i>7</i><i>1</i><i></i></div>
<div class="r" style="top:603.2px"><i>중지</i><i></i><i>385,536</i><i>하락</i><i>2,390</i><i>상승</i><i>153,000</i><i>105,000</i><i>3</i><i>서울특별시 구로구</i><i>개봉2동</i><i>상한</i><i>1995</i><i>783</i><i>방3/화1</i><i>B</i><i>B</i><i>S/S/S/S</i><i>A</i><i>계단</i><i>59㎡</i><i>76,000</i><i>2022-04</i><i>67,000</i><i>6.5억 ~ 7.0억</i><i>40,000</i><i>27,000</i><i>121,000</i><i>-</i><i>3,000</i><i>59.7%</i><i>-11.8%</i><i>-</i><i>2</i><i>5</i><i>-</i><i></i></div>
<div class="r x" style="top:613.6px"><i>중지</i><i></i><i>385,536</i><i>하락</i><i>2,390</i><i>상승</i><i>153,000</i><i>105,000</i><i>3</i><i>서울특별시 구로구</i><i>개봉2동</i><i>상호</i><i>1996</i><i>369</i><i>방3/화1</i><i>B</i><i>B</i><i>S/S/S/S</i><i>A</i><i>복도</i><i>59㎡</i><i>63,000</i><i>2021-04</i><i>63,000</i><i>6.0억 ~ 6.5억</i><i>43,000</i><i>20,000</i><i>103,000</i><i>1,000</i><i>3,000</i><i>68.3%</i><i>-8.7%</i><i>1</i><i>1</i><i>10</i><i>2</i><i></i></div>
<div class="r" style="top:624px"><i>중지</i><i></i><i>385,536</i><i>하락</i><i>2,390</i><i>상승</i><i>153,000</i><i>105,000</i><i>3</i><i>서울특별시 구로구</i><i>개봉2동</i><i>상호</i><i>1996</i><i>369</i><i>방3/화1</i><i>B</i><i>B</i><i>S/S/S/S</i><i>A</i><i>계단</i><i>59㎡</i><i>80,000</i><i>2021-10</i><i>67,000</i><i>6.5억 ~ 7.0억</i><i>50,000</i><i>17,000</i><i>101,000</i><i>-</i><i>4,000</i><i>74.6%</i><i>-16.3%</i><i>-</i><i>-</i><i>19</i><i>-</i><i></i></div>
<div class="r" style="top:634.4px"><i>중지</i><i></i><i>385,536</i><i>하락</i><i>2,390</i><i>상승</i><i>153,000</i><i>105,000</i><i>3</i><i>서울특별시 구로구</i><i>개봉2동</i><i>상호</i><i>1996</i><i>369</i><i>방3/화1</i><i>B</i><i>B</i><i>S/S/S/S</i><i>A</i><i>계단</i><i>84㎡</i><i>86,000</i><i>2021-10</i><i>75,000</i><i>7.0억 ~ 7.5억</i><i>50,000</i><i>25,000</i><i>125,000</i><i>-</i><i>2,000</i><i>66.7%</i><i>-12.8%</i><i>-</i><i>1</i><i>9</i><i>2</i><i></i></div>
</div>
</body></html>
